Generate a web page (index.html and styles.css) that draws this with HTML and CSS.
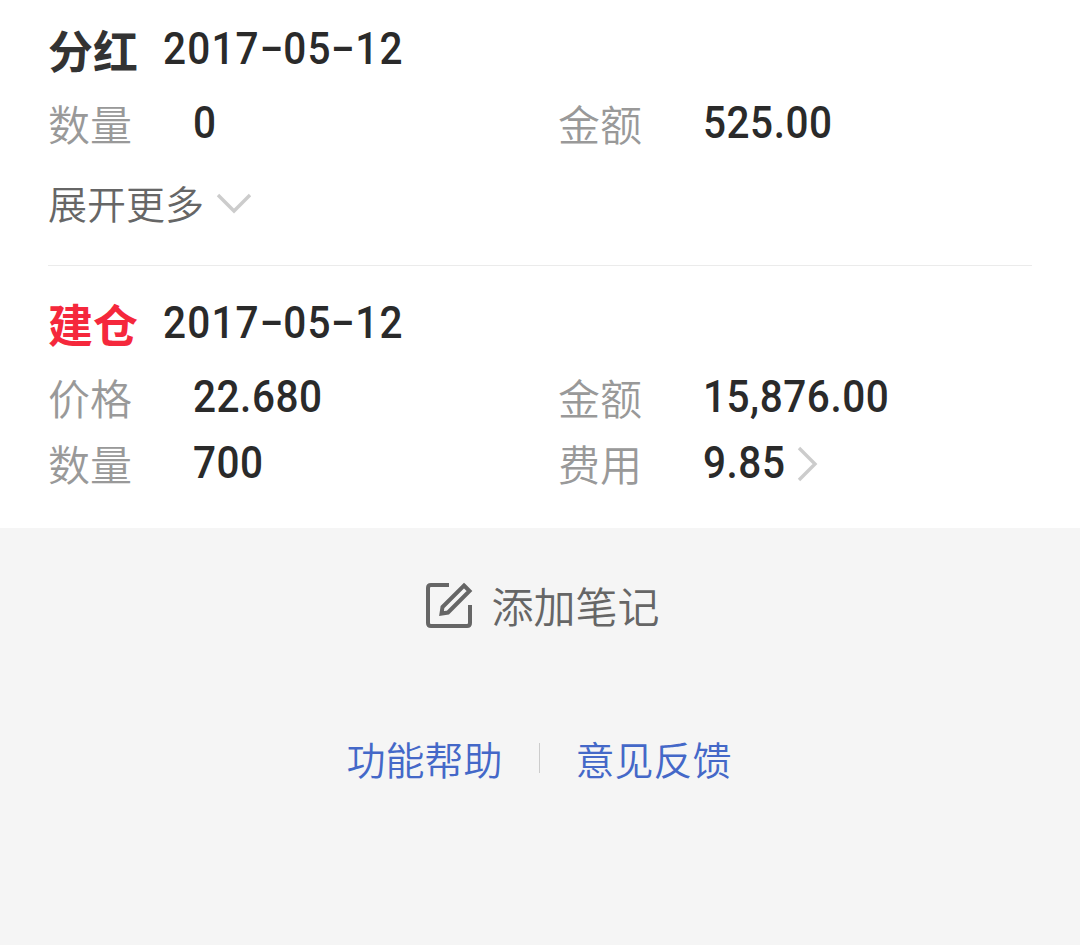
FILE: index.html
```
<!DOCTYPE html>
<html lang="zh-CN">
<head>
    <meta charset="UTF-8">
    <meta name="viewport" content="width=device-width, initial-scale=1.0">
    <title>交易记录</title>
    <link rel="stylesheet" href="styles.css">
</head>
<body>
    <div class="records">
        <!-- Dividend -->
        <div class="record first">
            <div class="record-title">
                <span class="type">分红</span>
                <span class="num date">2017<span class="dash">–</span>05<span class="dash">–</span>12</span>
            </div>
            <div class="fields">
                <div class="field"><span class="label">数量</span><span class="num">0</span></div>
                <div class="field"><span class="label">金额</span><span class="num">525.00</span></div>
            </div>
            <div class="more">
                <span>展开更多</span>
                <svg width="36" height="24" viewBox="0 0 36 24"><path d="M2 3 L18 19 L34 3" fill="none" stroke="#ccc" stroke-width="3.4"/></svg>
            </div>
        </div>

        <!-- Opening position -->
        <div class="record">
            <div class="record-title">
                <span class="type open">建仓</span>
                <span class="num date">2017<span class="dash">–</span>05<span class="dash">–</span>12</span>
            </div>
            <div class="fields">
                <div class="field"><span class="label">价格</span><span class="num">22.680</span></div>
                <div class="field"><span class="label">金额</span><span class="num">15,876.00</span></div>
                <div class="field"><span class="label">数量</span><span class="num">700</span></div>
                <div class="field">
                    <span class="label">费用</span><span class="num">9.85</span>
                    <svg class="arrow" width="24" height="36" viewBox="0 0 24 36"><path d="M3 2 L19 18 L3 34" fill="none" stroke="#ccc" stroke-width="3.4"/></svg>
                </div>
            </div>
        </div>
    </div>

    <div class="add-note">
        <svg width="48" height="48" viewBox="0 0 48 48" fill="none" stroke="#666" stroke-width="4">
            <path d="M24 3 H6 Q3 3 3 6 V41 Q3 44 6 44 H42 Q45 44 45 41 V23"/>
            <path d="M39 3.5 L44.5 9 L23 30.5 L16.5 31.5 L17.5 25 Z"/>
        </svg>
        <span>添加笔记</span>
    </div>

    <div class="links">
        <a>功能帮助</a>
        <span class="divider"></span>
        <a>意见反馈</a>
    </div>
</body>
</html>
```
FILE: styles.css
```
* {
    margin: 0;
    padding: 0;
    box-sizing: border-box;
}

body {
    font-family: "Noto Sans CJK SC", sans-serif;
    background-color: #f5f5f5;
    color: #666;
}

.records {
    background-color: #fff;
    padding: 0 48px;
}

.record {
    padding: 22px 0 29px;
}

.record.first {
    padding-top: 14px;
    border-bottom: 1px solid #ebebeb;
}

.record-title {
    display: flex;
    height: 74px;
    line-height: 72px;
    margin-bottom: 5px;
}

.type {
    width: 115px;
    font-size: 45px;
    font-weight: bold;
    color: #333;
}

.type.open {
    color: #f5283c;
}

.num {
    font-family: Roboto, sans-serif;
    font-size: 45px;
    font-weight: 500;
    letter-spacing: 0.6px;
    color: #2a2a2a;
    transform: translateY(-3px) scaleX(0.9);
    transform-origin: left;
}

.num.date {
    letter-spacing: 1.3px;
    transform: translateY(-1px) scaleX(0.9);
}

.dash {
    display: inline-block;
    margin: 0 -2px;
    transform: translateY(1px) scaleX(0.88);
}

.fields {
    display: grid;
    grid-template-columns: 510px 1fr;
}

.field {
    display: flex;
    align-items: center;
    height: 66px;
    line-height: 66px;
}

.label {
    width: 145px;
    margin-top: -6px;
    font-size: 42px;
    font-weight: 350;
    color: #999;
}

.arrow {
    margin: -4px 0 0 1px;
}

.more {
    display: flex;
    align-items: center;
    gap: 12px;
    height: 60px;
    margin-top: 17px;
    font-size: 39px;
    font-weight: 350;
}

.more span {
    margin-top: -9px;
}

.more svg {
    margin-top: -5px;
}

.add-note {
    display: flex;
    justify-content: center;
    align-items: center;
    gap: 18px;
    height: 80px;
    margin-top: 38px;
    padding-left: 5px;
    font-size: 42px;
    font-weight: 350;
}

.add-note span {
    margin-top: -4px;
}

.links {
    display: flex;
    justify-content: center;
    align-items: center;
    height: 60px;
    margin-top: 82px;
    padding-right: 2px;
    font-size: 39px;
    font-weight: 350;
    color: #4468c8;
}

.divider {
    width: 1px;
    height: 30px;
    margin: 0 36px;
    background-color: #ccc;
}
```
